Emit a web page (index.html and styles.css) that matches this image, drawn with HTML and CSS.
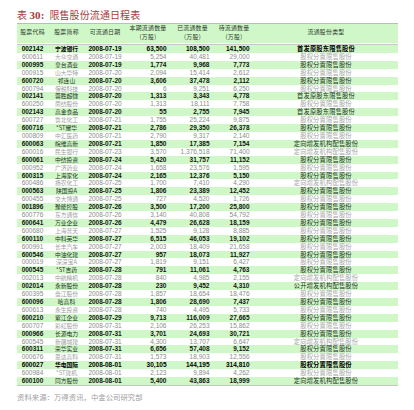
FILE: index.html
```html
<!DOCTYPE html>
<html>
<head>
<meta charset="utf-8">
<title>限售股份流通日程表</title>
<link rel="stylesheet" href="styles.css">
</head>
<body>
<div class="page">
  <h1 class="title"><span class="tk">表</span> <span class="tno">30:</span>限售股份流通日程表</h1>
  <table class="sched">
    <colgroup>
      <col class="c-code"><col class="c-name"><col class="c-date"><col class="c-num4"><col class="c-num5"><col class="c-num6"><col class="c-type">
    </colgroup>
    <thead>
      <tr>
        <th>股票代码</th>
        <th>股票简称</th>
        <th>可流通日期</th>
        <th class="two"><span class="hl">本期流通数量</span><span class="hl">(万股)</span></th>
        <th class="two"><span class="hl">已流通数量</span><span class="hl">(万股)</span></th>
        <th class="two"><span class="hl">待流通数量</span><span class="hl">(万股)</span></th>
        <th>流通股份类型</th>
      </tr>
    </thead>
    <tbody>
      <tr class="g x"><td>002142</td><td class="nm">宁波银行</td><td>2008-07-19</td><td class="n">63,500</td><td class="n">108,500</td><td class="n">141,500</td><td class="tp">首发原股东限售股份</td></tr>
      <tr><td>600611</td><td class="nm">大众交通</td><td>2008-07-19</td><td class="n">5,254</td><td class="n">40,481</td><td class="n">29,000</td><td class="tp">股权分置限售股份</td></tr>
      <tr class="g"><td>000995</td><td class="nm">皇台酒业</td><td>2008-07-19</td><td class="n">1,774</td><td class="n">9,968</td><td class="n">7,773</td><td class="tp">股权分置限售股份</td></tr>
      <tr><td>000915</td><td class="nm">山大华特</td><td>2008-07-20</td><td class="n">2,094</td><td class="n">15,414</td><td class="n">2,612</td><td class="tp">股权分置限售股份</td></tr>
      <tr class="g"><td>600720</td><td class="nm">祁连山</td><td>2008-07-20</td><td class="n">3,606</td><td class="n">37,478</td><td class="n">2,112</td><td class="tp">股权分置限售股份</td></tr>
      <tr><td>600794</td><td class="nm">保税科技</td><td>2008-07-20</td><td class="n">6</td><td class="n">9,251</td><td class="n">6,250</td><td class="tp">股权分置限售股份</td></tr>
      <tr class="g"><td>002141</td><td class="nm">蓉胜超微</td><td>2008-07-20</td><td class="n">1,313</td><td class="n">3,343</td><td class="n">4,778</td><td class="tp">首发原股东限售股份</td></tr>
      <tr><td>600250</td><td class="nm">南纺股份</td><td>2008-07-20</td><td class="n">1,313</td><td class="n">18,111</td><td class="n">7,758</td><td class="tp">股权分置限售股份</td></tr>
      <tr class="g"><td>002143</td><td class="nm">高金食品</td><td>2008-07-20</td><td class="n">55</td><td class="n">2,755</td><td class="n">7,945</td><td class="tp">首发原股东限售股份</td></tr>
      <tr><td>600727</td><td class="nm">鲁北化工</td><td>2008-07-21</td><td class="n">1,755</td><td class="n">25,224</td><td class="n">9,875</td><td class="tp">股权分置限售股份</td></tr>
      <tr class="g"><td>600716</td><td class="nm">*ST耀华</td><td>2008-07-21</td><td class="n">2,786</td><td class="n">29,350</td><td class="n">26,378</td><td class="tp">股权分置限售股份</td></tr>
      <tr><td>000809</td><td class="nm">中汇医药</td><td>2008-07-21</td><td class="n">2,790</td><td class="n">9,317</td><td class="n">2,140</td><td class="tp">股权分置限售股份</td></tr>
      <tr class="g"><td>600063</td><td class="nm">皖维高新</td><td>2008-07-21</td><td class="n">1,850</td><td class="n">17,385</td><td class="n">7,154</td><td class="tp">定向增发机构配售股份</td></tr>
      <tr><td>600016</td><td class="nm">民生银行</td><td>2008-07-23</td><td class="n">3,570</td><td class="n">1,376,518</td><td class="n">71,400</td><td class="tp">定向增发机构配售股份</td></tr>
      <tr class="g"><td>600061</td><td class="nm">中纺投资</td><td>2008-07-24</td><td class="n">5,420</td><td class="n">31,757</td><td class="n">11,152</td><td class="tp">股权分置限售股份</td></tr>
      <tr><td>000952</td><td class="nm">广济药业</td><td>2008-07-24</td><td class="n">1,658</td><td class="n">23,576</td><td class="n">1,595</td><td class="tp">股权分置限售股份</td></tr>
      <tr class="g"><td>600315</td><td class="nm">上海家化</td><td>2008-07-24</td><td class="n">2,165</td><td class="n">12,376</td><td class="n">5,150</td><td class="tp">股权分置限售股份</td></tr>
      <tr><td>600486</td><td class="nm">扬农化工</td><td>2008-07-25</td><td class="n">1,700</td><td class="n">7,410</td><td class="n">4,290</td><td class="tp">定向增发机构配售股份</td></tr>
      <tr class="g"><td>000563</td><td class="nm">陕国投A</td><td>2008-07-25</td><td class="n">1,806</td><td class="n">23,389</td><td class="n">12,452</td><td class="tp">股权分置限售股份</td></tr>
      <tr><td>600455</td><td class="nm">交大博通</td><td>2008-07-25</td><td class="n">727</td><td class="n">4,520</td><td class="n">1,726</td><td class="tp">股权分置限售股份</td></tr>
      <tr class="g"><td>001896</td><td class="nm">豫能控股</td><td>2008-07-26</td><td class="n">3,500</td><td class="n">17,200</td><td class="n">25,800</td><td class="tp">股权分置限售股份</td></tr>
      <tr><td>600776</td><td class="nm">东方通信</td><td>2008-07-26</td><td class="n">3,140</td><td class="n">40,808</td><td class="n">54,792</td><td class="tp">股权分置限售股份</td></tr>
      <tr class="g"><td>600641</td><td class="nm">万业企业</td><td>2008-07-26</td><td class="n">4,479</td><td class="n">26,628</td><td class="n">18,159</td><td class="tp">股权分置限售股份</td></tr>
      <tr><td>600680</td><td class="nm">上海普天</td><td>2008-07-27</td><td class="n">1,525</td><td class="n">9,128</td><td class="n">8,885</td><td class="tp">股权分置限售股份</td></tr>
      <tr class="g"><td>600110</td><td class="nm">中科英华</td><td>2008-07-27</td><td class="n">6,515</td><td class="n">46,053</td><td class="n">19,102</td><td class="tp">股权分置限售股份</td></tr>
      <tr><td>600991</td><td class="nm">长丰汽车</td><td>2008-07-27</td><td class="n">2,003</td><td class="n">18,409</td><td class="n">21,658</td><td class="tp">股权分置限售股份</td></tr>
      <tr class="g"><td>600546</td><td class="nm">中油化建</td><td>2008-07-27</td><td class="n">957</td><td class="n">18,073</td><td class="n">11,927</td><td class="tp">股权分置限售股份</td></tr>
      <tr><td>000019</td><td class="nm">深深宝A</td><td>2008-07-27</td><td class="n">1,819</td><td class="n">9,151</td><td class="n">6,427</td><td class="tp">股权分置限售股份</td></tr>
      <tr class="g"><td>000545</td><td class="nm">*ST吉药</td><td>2008-07-28</td><td class="n">791</td><td class="n">11,061</td><td class="n">4,763</td><td class="tp">股权分置限售股份</td></tr>
      <tr><td>002013</td><td class="nm">中航精机</td><td>2008-07-28</td><td class="n">840</td><td class="n">4,985</td><td class="n">2,155</td><td class="tp">定向增发机构配售股份</td></tr>
      <tr class="g"><td>002014</td><td class="nm">永新股份</td><td>2008-07-28</td><td class="n">230</td><td class="n">9,452</td><td class="n">4,310</td><td class="tp">公开增发机构配售股份</td></tr>
      <tr><td>600395</td><td class="nm">盘江股份</td><td>2008-07-28</td><td class="n">1,857</td><td class="n">18,654</td><td class="n">18,476</td><td class="tp">股权分置限售股份</td></tr>
      <tr class="g"><td>600096</td><td class="nm">哈高科</td><td>2008-07-28</td><td class="n">1,806</td><td class="n">28,690</td><td class="n">7,437</td><td class="tp">股权分置限售股份</td></tr>
      <tr><td>600613</td><td class="nm">永生投资</td><td>2008-07-28</td><td class="n">740</td><td class="n">4,495</td><td class="n">5,733</td><td class="tp">股权分置限售股份</td></tr>
      <tr class="g"><td>600210</td><td class="nm">紫江企业</td><td>2008-07-29</td><td class="n">9,713</td><td class="n">116,009</td><td class="n">27,665</td><td class="tp">股权分置限售股份</td></tr>
      <tr><td>600707</td><td class="nm">彩虹股份</td><td>2008-07-31</td><td class="n">2,106</td><td class="n">26,253</td><td class="n">15,862</td><td class="tp">股权分置限售股份</td></tr>
      <tr class="g"><td>000966</td><td class="nm">长源电力</td><td>2008-07-31</td><td class="n">3,701</td><td class="n">24,693</td><td class="n">30,721</td><td class="tp">股权分置限售股份</td></tr>
      <tr><td>600545</td><td class="nm">新疆城建</td><td>2008-07-31</td><td class="n">4,300</td><td class="n">13,707</td><td class="n">6,647</td><td class="tp">定向增发机构配售股份</td></tr>
      <tr class="g"><td>600311</td><td class="nm">荣华实业</td><td>2008-07-31</td><td class="n">6,656</td><td class="n">57,408</td><td class="n">9,152</td><td class="tp">股权分置限售股份</td></tr>
      <tr><td>000676</td><td class="nm">思达高科</td><td>2008-07-31</td><td class="n">1,573</td><td class="n">18,903</td><td class="n">12,556</td><td class="tp">股权分置限售股份</td></tr>
      <tr class="g x"><td>600027</td><td class="nm">华电国际</td><td>2008-08-01</td><td class="n">30,105</td><td class="n">144,195</td><td class="n">314,810</td><td class="tp">股权分置限售股份</td></tr>
      <tr><td>600984</td><td class="nm">*ST建机</td><td>2008-08-01</td><td class="n">2,123</td><td class="n">9,894</td><td class="n">4,262</td><td class="tp">股权分置限售股份</td></tr>
      <tr class="g"><td>600100</td><td class="nm">同方股份</td><td>2008-08-01</td><td class="n">5,400</td><td class="n">43,863</td><td class="n">18,999</td><td class="tp">定向增发机构配售股份</td></tr>
    </tbody>
  </table>
  <p class="source">资料来源：万得资讯，中金公司研究部</p>
</div>
</body>
</html>
```

FILE: styles.css
```css
html, body {
  margin: 0;
  padding: 0;
  background: #ffffff;
}

.page {
  padding: 9px 16px 0 17px;
  font-family: "Liberation Sans", "Noto Sans CJK SC", sans-serif;
}

.title {
  margin: 0 0 2px 0;
  font-family: "Noto Sans CJK SC", serif;
  font-size: 10px;
  line-height: 12px;
  font-weight: 400;
  color: #a23d3d;
  letter-spacing: 0.1px;
}

.tno {
  margin-right: 5px;
  font-family: "Liberation Serif", serif;
  font-size: 11px;
  font-weight: 700;
}

.sched {
  width: 381px;
  table-layout: fixed;
  border-collapse: separate;
  border-spacing: 0;
  border-top: 1px solid #bcbcbc;
  border-bottom: 1px solid #c4c4c4;
}

.c-code { width: 31px; }
.c-name { width: 37px; }
.c-date { width: 40px; }
.c-num4 { width: 46px; }
.c-num5 { width: 43px; }
.c-num6 { width: 40px; }
.c-type { width: 144px; }

.sched th {
  box-sizing: border-box;
  height: 20px;
  padding: 4px 0 0 0;
  background: #d0f7c8;
  border-bottom: 1px solid #ffffff;
  font-family: "Noto Sans CJK SC", sans-serif;
  font-size: 5.9px;
  line-height: 8.6px;
  font-weight: 400;
  color: #2e3a2e;
  text-align: center;
  vertical-align: top;
  letter-spacing: 0.25px;
}

.sched th.two {
  padding-top: 0;
}

.hl {
  display: block;
  line-height: 8.6px;
}

.sched tbody tr:first-child td {
  border-top: 1px solid #c9c9c9;
}

.sched td {
  height: 7.9px;
  padding: 0;
  font-size: 6.5px;
  line-height: 7.9px;
  color: #8c8c8c;
  text-align: center;
  white-space: nowrap;
  overflow: hidden;
}

.sched td.n {
  text-align: right;
  padding-right: 4.5px;
}

.sched td.nm {
  font-family: "Noto Sans CJK SC", sans-serif;
  font-size: 5.8px;
  color: #a0a0a0;
  font-weight: 400;
}

.sched td.tp {
  font-family: "Noto Sans CJK SC", sans-serif;
  font-size: 6.3px;
  color: #a6a6a6;
  font-weight: 400;
  letter-spacing: 0.15px;
}

.sched tr.g td {
  background: #d0f7c8;
  color: #141414;
  font-weight: 700;
}

.sched tr.g td.nm,
.sched tr.g td.tp {
  color: #223322;
  font-weight: 400;
}

.sched tr.x td {
  color: #000000;
}

.sched tr.x td.nm,
.sched tr.x td.tp {
  color: #000000;
  font-weight: 700;
}

.source {
  margin: 5px 0 0 0;
  font-family: "Noto Sans CJK SC", serif;
  font-size: 7.4px;
  line-height: 12px;
  color: #a0a0a0;
}
```
